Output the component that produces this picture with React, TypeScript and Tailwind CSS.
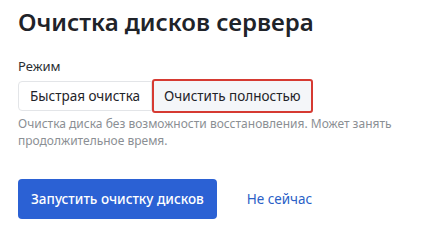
export default function App() {
  return (
    <div className="min-h-screen bg-white px-[18px] pt-[6px] font-['Noto_Sans',sans-serif] text-[#1f2329]">
      <h1 className="text-[24px] font-semibold leading-[32px]">Очистка дисков сервера</h1>

      <div className="mt-[19px] text-[13px] leading-[18px] text-[#2b2f33]">Режим</div>

      <div className="mt-[4px] flex items-center">
        <button className="h-[30px] rounded-l-[4px] border border-[#e3e5e8] bg-white px-[11px] text-[13.5px] text-[#1f2329]">
          Быстрая очистка
        </button>
        <button className="h-[34px] rounded-[3px] border-[2.5px] border-[#d63a32] bg-[#f4f6f9] px-[10px] text-[13.5px] text-[#1f2329]">
          Очистить полностью
        </button>
      </div>

      <p className="mt-[2px] w-[405px] text-[12px] leading-[17px] text-[#8b8f94]">
        Очистка диска без возможности восстановления. Может занять продолжительное время.
      </p>

      <div className="mt-[30px] flex items-center gap-[30px]">
        <button className="h-[40px] rounded-[4px] bg-[#2b61d4] px-[13px] text-[13.5px] font-medium text-white">
          Запустить очистку дисков
        </button>
        <button className="text-[13.5px] text-[#2b5fc7]">Не сейчас</button>
      </div>
    </div>
  );
}
